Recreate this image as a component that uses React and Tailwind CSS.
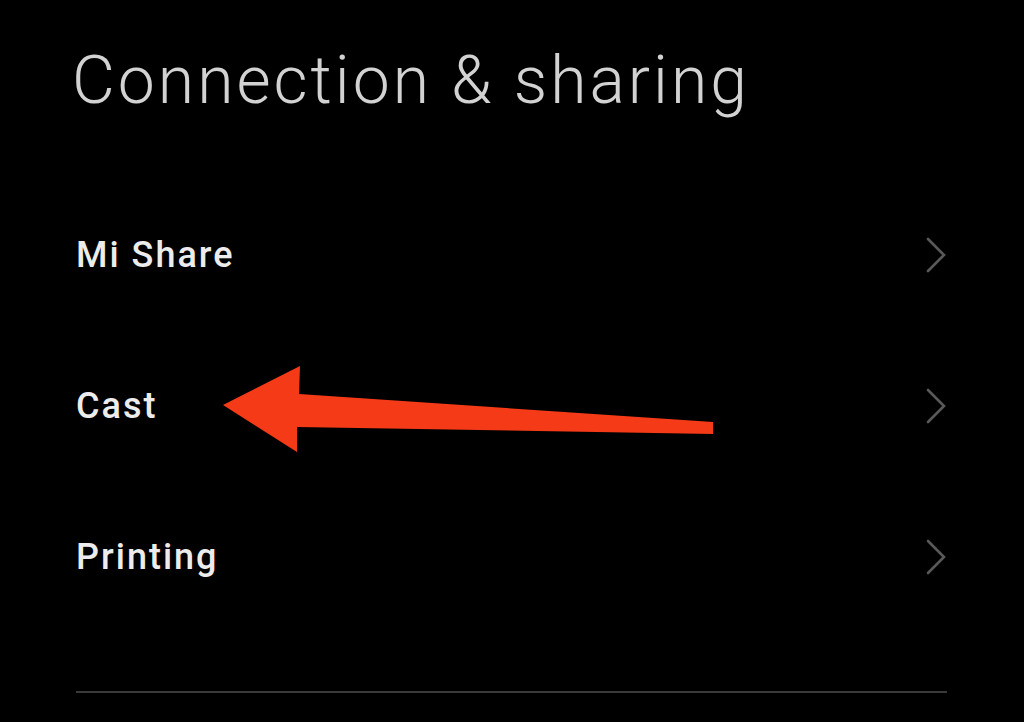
import React from "react";

const items = ["Mi Share", "Cast", "Printing"];

const Chevron = () => (
  <svg width="22" height="36" viewBox="0 0 22 36" fill="none" className="shrink-0">
    <polyline
      points="3,2 19,18 3,34"
      stroke="#595959"
      strokeWidth="2.6"
      strokeLinecap="round"
      strokeLinejoin="miter"
    />
  </svg>
);

export default function App() {
  return (
    <div
      className="relative w-full h-[722px] overflow-hidden bg-black pl-[76px] pr-[77px]"
      style={{ fontFamily: "Roboto, 'Noto Sans', sans-serif" }}
    >
      {/* page title */}
      <h1 className="pt-[41px] -ml-[4px] text-[66px] leading-[80px] font-light tracking-[3px] text-[#d2d2d2]">
        Connection &amp; sharing
      </h1>

      {/* settings rows */}
      <div className="mt-[58px] flex flex-col">
        {items.map((label) => (
          <div key={label} className="h-[151px] flex items-center justify-between">
            <span className="text-[36px] leading-[44px] font-medium tracking-[2px] text-[#ececec]">{label}</span>
            <Chevron />
          </div>
        ))}
      </div>

      <div className="mt-[59px] h-[2px] bg-[#3a3a3a]" />

      {/* annotation arrow */}
      <svg
        className="absolute inset-0 pointer-events-none"
        width="1024"
        height="722"
        viewBox="0 0 1024 722"
      >
        <polygon
          points="223,405 300,366 299,394 713,422 713,434 297,427 297,452"
          fill="#f53a17"
        />
      </svg>
    </div>
  );
}
